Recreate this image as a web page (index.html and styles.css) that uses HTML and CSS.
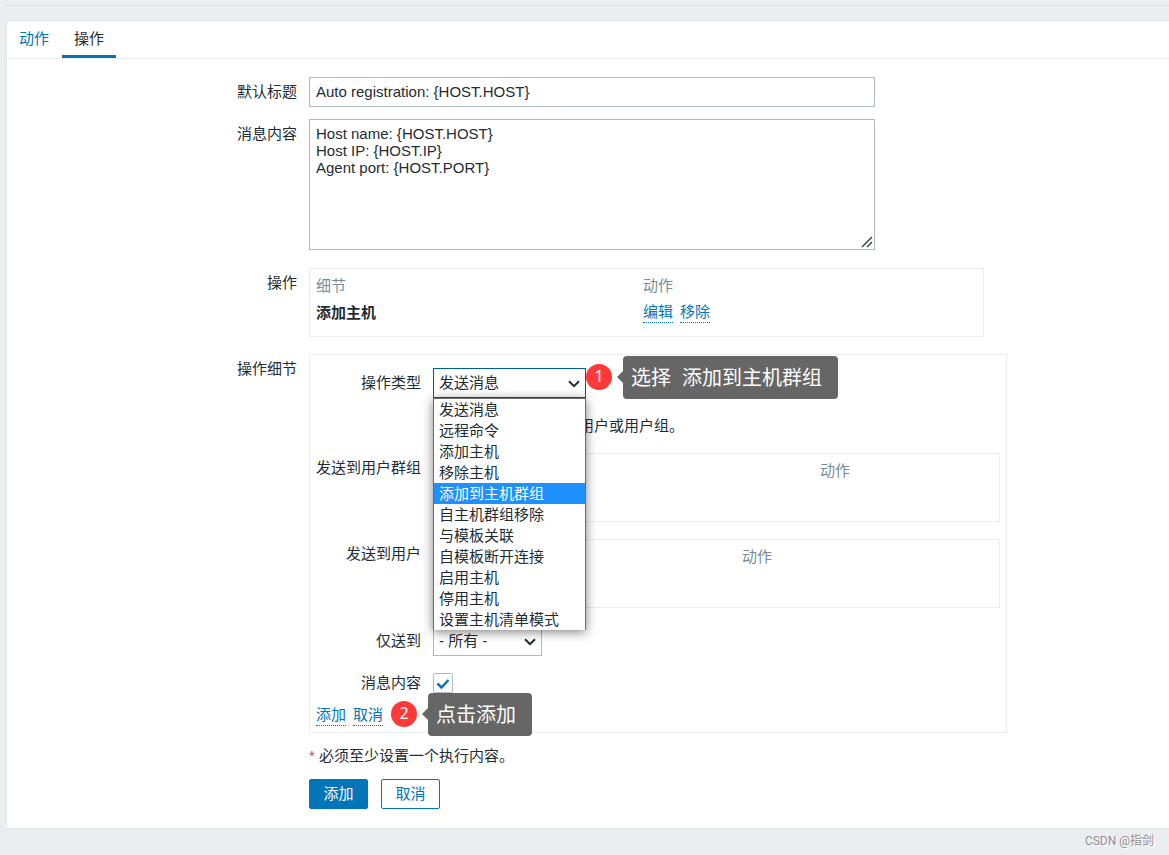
FILE: index.html
```html
<!DOCTYPE html>
<html lang="zh-CN">
<head>
<meta charset="utf-8">
<title>操作</title>
<link rel="stylesheet" href="styles.css">
</head>
<body>
<main class="page">
  <div class="panel">
    <nav class="tabs">
      <a class="tab" href="#action">动作</a>
      <a class="tab tab-active" href="#operations" aria-current="page">操作</a>
    </nav>
    <form class="form">
      <div class="row">
        <label class="label" for="subject">默认标题</label>
        <input class="control text-input" id="subject" type="text" value="Auto registration: {HOST.HOST}">
      </div>
      <div class="row row-message">
        <label class="label" for="message">消息内容</label>
        <div class="text-area-wrap">
          <textarea class="control text-area" id="message">Host name: {HOST.HOST}
Host IP: {HOST.IP}
Agent port: {HOST.PORT}</textarea>
          <svg class="grip" viewBox="0 0 12 12" aria-hidden="true"><path d="M1 11L11 1M6 11l5-5"/></svg>
        </div>
      </div>
      <div class="row row-group">
        <span class="label">操作</span>
        <div class="box box-operations">
          <table class="list">
            <thead><tr><th class="col-details">细节</th><th>动作</th></tr></thead>
            <tbody><tr>
              <td class="strong">添加主机</td>
              <td><span class="links"><a class="link" href="#edit">编辑</a><a class="link" href="#remove">移除</a></span></td>
            </tr></tbody>
          </table>
        </div>
      </div>
      <div class="row row-details">
        <span class="label">操作细节</span>
        <div class="details">
          <div class="detail-row">
            <label class="label" for="type">操作类型</label>
            <div class="select-wrap select-type">
              <select class="control select select-open" id="type"><option>发送消息</option></select>
              <svg class="chevron" viewBox="0 0 12 8" aria-hidden="true"><path d="M1 1.2l5 5 5-5"/></svg>
              <ul class="options">
                <li class="option">发送消息</li>
                <li class="option">远程命令</li>
                <li class="option">添加主机</li>
                <li class="option">移除主机</li>
                <li class="option option-active">添加到主机群组</li>
                <li class="option">自主机群组移除</li>
                <li class="option">与模板关联</li>
                <li class="option">自模板断开连接</li>
                <li class="option">启用主机</li>
                <li class="option">停用主机</li>
                <li class="option">设置主机清单模式</li>
              </ul>
              <div class="note note-type"><span class="badge">1</span><span class="callout">选择&nbsp; 添加到主机群组</span></div>
            </div>
          </div>
          <div class="detail-row">
            <p class="hint hint-recipients">用户或用户组。</p>
          </div>
          <div class="detail-row">
            <span class="label">发送到用户群组</span>
            <div class="box">
              <table class="list"><thead><tr><th class="col-groups"></th><th>动作</th></tr></thead></table>
            </div>
          </div>
          <div class="detail-row">
            <span class="label">发送到用户</span>
            <div class="box">
              <table class="list"><thead><tr><th class="col-users"></th><th>动作</th></tr></thead></table>
            </div>
          </div>
          <div class="detail-row detail-media">
            <label class="label" for="media">仅送到</label>
            <div class="select-wrap select-media">
              <select class="control select" id="media"><option>- 所有 -</option></select>
              <svg class="chevron" viewBox="0 0 12 8" aria-hidden="true"><path d="M1 1.2l5 5 5-5"/></svg>
            </div>
          </div>
          <div class="detail-row detail-check">
            <label class="label" for="default-message">消息内容</label>
            <span class="check-wrap">
              <input class="check" id="default-message" type="checkbox" checked>
              <svg class="tick" viewBox="0 0 14 12" aria-hidden="true"><path d="M1.5 5.5l4 4 7-7.5"/></svg>
            </span>
          </div>
          <div class="detail-actions">
            <span class="links"><a class="link" href="#add">添加</a><a class="link" href="#cancel">取消</a></span>
            <div class="note note-add"><span class="badge">2</span><span class="callout">点击添加</span></div>
          </div>
        </div>
      </div>
      <div class="row row-foot">
        <p class="hint"><span class="asterisk">*</span> 必须至少设置一个执行内容。</p>
      </div>
      <div class="row row-foot">
        <div class="buttons">
          <button class="button button-primary" type="button">添加</button>
          <button class="button" type="button">取消</button>
        </div>
      </div>
    </form>
  </div>
  <footer class="watermark">CSDN @指剑</footer>
</main>
</body>
</html>
```
FILE: styles.css
```css
* {
  box-sizing: border-box;
}

body {
  margin: 0;
  background: #ebeef0;
  color: #1f2c33;
  font: 15px/20px "Liberation Sans", "Noto Sans CJK SC", sans-serif;
}

p,
ul {
  margin: 0;
  padding: 0;
}

.page {
  padding: 5px 0 0 6px;
}

.page::before {
  content: "";
  display: block;
  height: 14px;
  border-top: 1px solid #dfe4e7;
}

.panel {
  background: #fff;
  border: 1px solid #dfe4e7;
  border-right: 0;
}

/* Tabs */
.tabs {
  display: flex;
  gap: 1px;
  border-bottom: 1px solid #ebeef0;
}

.tab {
  padding: 8px 12px 6px;
  border-bottom: 3px solid transparent;
  color: #0275b8;
  text-decoration: none;
}

.tab-active {
  border-bottom-color: #0275b8;
  color: #1f2c33;
}

/* Form rows */
.form {
  padding: 18px 0 19px;
}

.row {
  display: grid;
  grid-template-columns: 290px minmax(0, 1fr);
  column-gap: 12px;
}

.row-message {
  margin-top: 12px;
}

.row-group {
  margin-top: 18px;
}

.row-details {
  margin-top: 17px;
}

.row-foot {
  margin-top: 13px;
}

.row-foot > * {
  grid-column: 2;
}

.label {
  padding-top: 5px;
  text-align: right;
}

.control {
  display: block;
  width: 100%;
  margin: 0;
  border: 1px solid #acbbc2;
  border-radius: 0;
  background: #fff;
  color: #1f2c33;
  font: inherit;
}

.text-input {
  max-width: 566px;
  height: 30px;
  padding: 0 6px 2px;
}

.text-area-wrap {
  position: relative;
  max-width: 566px;
}

.text-area {
  height: 131px;
  padding: 5px 6px;
  line-height: 17px;
  resize: none;
}

.grip {
  position: absolute;
  right: 2px;
  bottom: 2px;
  width: 12px;
  height: 12px;
  fill: none;
  stroke: #444;
  stroke-width: 1.5;
  pointer-events: none;
}

/* Lists */
.box {
  min-height: 69px;
  padding: 3px 6px;
  border: 1px solid #ebeef0;
}

.box-operations {
  max-width: 675px;
}

.list {
  width: 100%;
  table-layout: fixed;
  border-collapse: collapse;
}

.list th,
.list td {
  height: 27px;
  padding: 0;
  text-align: left;
  vertical-align: middle;
}

.list th {
  color: #768d99;
  font-weight: 400;
}

.list .strong {
  font-weight: 700;
}

.col-details {
  width: 327px;
}

.col-groups {
  width: 380px;
}

.col-users {
  width: 302px;
}

.links {
  display: inline-flex;
  gap: 7px;
}

.link {
  border-bottom: 1px dotted #0275b8;
  color: #0275b8;
  text-decoration: none;
}

/* Operation details */
.details {
  display: grid;
  row-gap: 17px;
  max-width: 698px;
  padding: 13px 6px 6px;
  border: 1px solid #ebeef0;
}

.detail-row {
  display: grid;
  grid-template-columns: 105px minmax(0, 1fr);
  column-gap: 12px;
}

.detail-row > .hint {
  grid-column: 2;
  line-height: 21px;
}

.hint-recipients {
  padding-left: 146px;
}

.detail-media {
  margin-top: 1px;
}

.detail-check .label {
  padding-top: 0;
}

.asterisk {
  color: #e33734;
}

.select-wrap {
  position: relative;
}

.select-type {
  width: 153px;
}

.select-media {
  width: 109px;
}

.select {
  height: 30px;
  padding: 0 5px;
  appearance: none;
}

.select-open {
  border-color: #005f96;
}

.chevron {
  position: absolute;
  top: 12px;
  right: 6px;
  width: 12px;
  height: 8px;
  fill: none;
  stroke: #1f2c33;
  stroke-width: 2;
}

.options {
  position: absolute;
  z-index: 1;
  top: 100%;
  left: 0;
  width: 100%;
  border: 1px solid #6b6b6b;
  border-bottom: 0;
  background: #fff;
  box-shadow: 0 2px 10px rgba(0, 0, 0, 0.5);
  list-style: none;
}

.option {
  padding: 0 5px;
  line-height: 21px;
}

.option-active {
  background: #1e90ff;
  color: #fff;
}

.check-wrap {
  position: relative;
  width: 20px;
  height: 20px;
}

.check {
  display: block;
  width: 20px;
  height: 20px;
  margin: 0;
  border: 1px solid #acbbc2;
  border-radius: 2px;
  background: #fff;
  appearance: none;
}

.tick {
  position: absolute;
  top: 5px;
  left: 3px;
  width: 14px;
  height: 12px;
  fill: none;
  stroke: #0275b8;
  stroke-width: 2.5;
  pointer-events: none;
}

.detail-actions {
  position: relative;
  display: flex;
  margin-top: -5px;
}

/* Numbered annotations */
.note {
  position: absolute;
  z-index: 2;
  display: flex;
  align-items: center;
  gap: 11px;
  color: #fff;
  white-space: nowrap;
}

.note-type {
  top: -12px;
  left: 100%;
}

.note-add {
  top: -12px;
  left: 75px;
}

.badge {
  width: 26px;
  height: 26px;
  margin-bottom: 2px;
  border-radius: 50%;
  background: #ff3838;
  font: 16px/24px "Noto Sans", sans-serif;
  text-align: center;
}

.callout {
  position: relative;
  padding: 2px 16px 0 8px;
  border-radius: 4px;
  background: #666;
  font-size: 20px;
  line-height: 41px;
}

.callout::before {
  content: "";
  position: absolute;
  top: 15px;
  right: 100%;
  border: 6px solid transparent;
  border-right-color: #666;
  border-left: 0;
}

/* Buttons */
.buttons {
  display: flex;
  gap: 13px;
}

.button {
  min-width: 59px;
  height: 30px;
  padding: 0 13px;
  border: 1px solid #0275b8;
  border-radius: 2px;
  background: #fff;
  color: #0275b8;
  font: inherit;
}

.button-primary {
  background: #0275b8;
  color: #fff;
}

.watermark {
  padding: 2px 15px 4px;
  color: #8b8f92;
  font: 12px/20px Roboto, "Noto Sans CJK SC", sans-serif;
  text-align: right;
  text-shadow: 1px 1px 0 #fff;
}
```
